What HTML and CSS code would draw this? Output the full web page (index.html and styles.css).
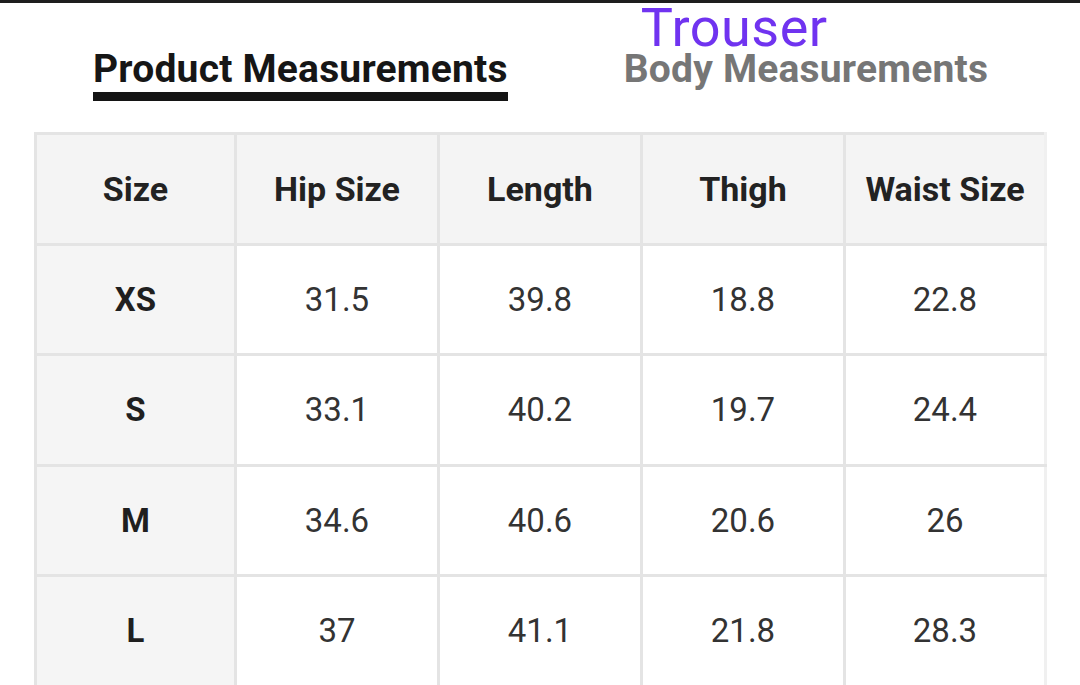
FILE: index.html
```html
<!DOCTYPE html>
<html lang="en">
<head>
<meta charset="utf-8">
<title>Trouser Size Chart</title>
<link rel="stylesheet" href="styles.css">
</head>
<body>
<div class="page">
  <div class="tabs">
    <div class="tab tab-active">Product Measurements</div>
    <div class="tab tab-muted">
      <span class="note">Trouser</span>
      Body Measurements
    </div>
  </div>
  <table class="chart">
    <colgroup>
      <col class="c1"><col class="c2"><col class="c3"><col class="c4"><col class="c5">
    </colgroup>
    <thead>
      <tr><th>Size</th><th>Hip Size</th><th>Length</th><th>Thigh</th><th>Waist Size</th></tr>
    </thead>
    <tbody>
      <tr><th>XS</th><td>31.5</td><td>39.8</td><td>18.8</td><td>22.8</td></tr>
      <tr><th>S</th><td>33.1</td><td>40.2</td><td>19.7</td><td>24.4</td></tr>
      <tr><th>M</th><td>34.6</td><td>40.6</td><td>20.6</td><td>26</td></tr>
      <tr><th>L</th><td>37</td><td>41.1</td><td>21.8</td><td>28.3</td></tr>
    </tbody>
  </table>
</div>
</body>
</html>
```

FILE: styles.css
```css
html, body {
  margin: 0;
  padding: 0;
  background: #ffffff;
  overflow: hidden;
}
.page {
  width: 1080px;
  height: 685px;
  border-top: 3px solid #1e1e1e;
  box-sizing: border-box;
  font-family: Roboto, "Liberation Sans", sans-serif;
  overflow: hidden;
}
.tabs {
  display: flex;
  padding-left: 93px;
  margin-top: 43px;
}
.tab {
  font-size: 39px;
  font-weight: 700;
  line-height: 46px;
  letter-spacing: 0.2px;
  white-space: nowrap;
  position: relative;
}
.tab-active {
  color: #161616;
  border-bottom: 9px solid #141414;
}
.tab-muted {
  color: #767676;
  margin-left: 116px;
}
.note {
  position: absolute;
  left: 17px;
  top: -40px;
  font-size: 54px;
  font-weight: 400;
  line-height: 44px;
  letter-spacing: 0.5px;
  color: #7033f0;
}
.chart {
  margin-top: 31px;
  margin-left: 34px;
  border-collapse: collapse;
  table-layout: fixed;
  width: 1010px;
}
.c1 { width: 200px; }
.c2, .c3, .c4 { width: 203px; }
.c5 { width: 201px; }
.chart th, .chart td {
  height: 107.5px;
  padding: 0;
  text-align: center;
  vertical-align: middle;
  border: 3px solid #e4e4e4;
}
.chart tr > :last-child {
  border-right-color: #f0f0f0;
}
.chart thead th {
  background: #f4f4f4;
  color: #222222;
  font-size: 34px;
  font-weight: 700;
}
.chart tbody th {
  background: #f5f5f5;
  color: #1f1f1f;
  font-size: 33px;
  font-weight: 700;
}
.chart td {
  background: #ffffff;
  color: #333333;
  font-size: 33px;
  font-weight: 400;
}
```
